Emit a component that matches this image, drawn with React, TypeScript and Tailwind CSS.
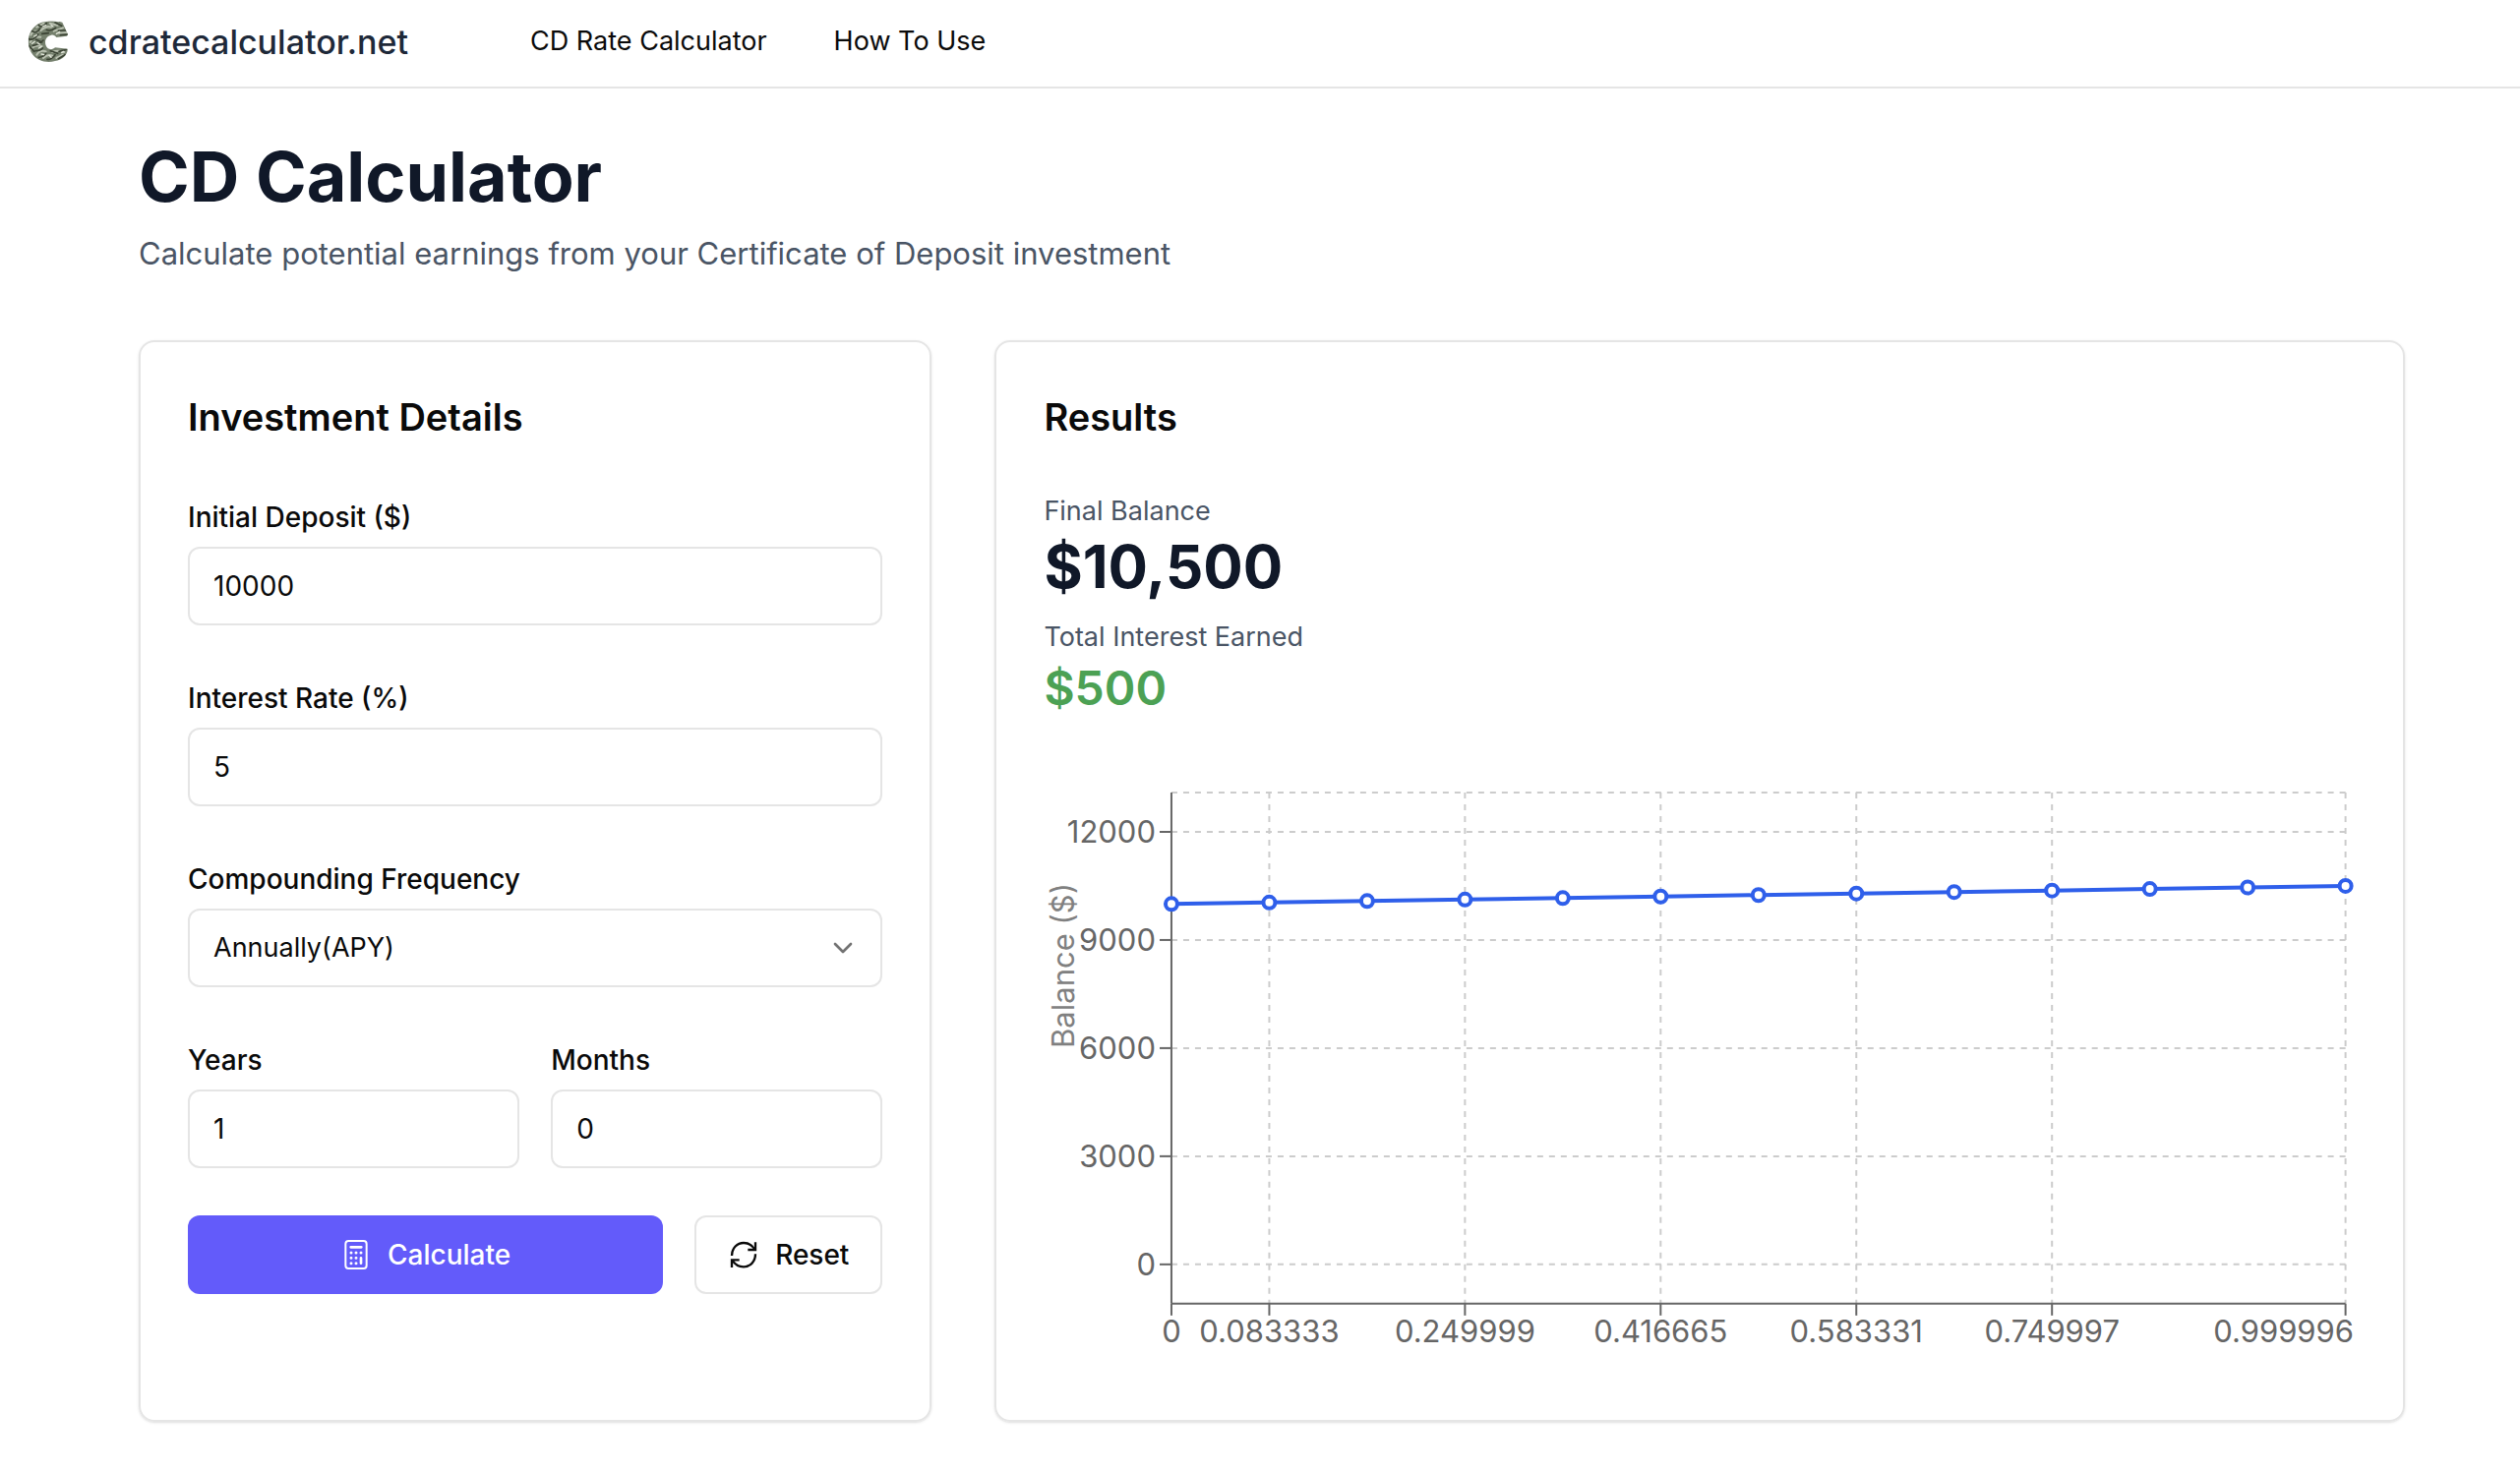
import { useState } from 'react';
import type { InputHTMLAttributes } from 'react';
import { ChevronDown } from 'lucide-react';

const frequencies = ['Annually(APY)', 'Semi-annually', 'Quarterly', 'Monthly', 'Daily'];

const navLinks = [
  { label: 'CD Rate Calculator', href: '#calculator' },
  { label: 'How To Use', href: '#how-to-use' },
];

const chartPoints = [
  10000, 10040.74, 10081.65, 10122.72, 10163.96, 10205.37, 10246.95, 10288.7, 10330.62, 10372.7, 10414.97,
  10457.4, 10500,
];

const yTicks = [0, 3000, 6000, 9000, 12000];

const xTicks = [
  { index: 0, label: '0' },
  { index: 1, label: '0.083333' },
  { index: 3, label: '0.249999' },
  { index: 5, label: '0.416665' },
  { index: 7, label: '0.583331' },
  { index: 9, label: '0.749997' },
  { index: 12, label: '0.999996', labelX: 1261 },
];

// Plot area inside the chart's viewBox
const plot = { left: 130, right: 1324, top: 26, bottom: 546, zero: 506, perUnit: 110 / 3000 };

const xAt = (index: number) => plot.left + ((plot.right - plot.left) * index) / (chartPoints.length - 1);
const yAt = (value: number) => plot.zero - value * plot.perUnit;

// C made of crumpled bank notes
function Logo() {
  return (
    <svg viewBox="0 0 126 126" className="size-[42px]" aria-hidden="true">
      <clipPath id="logo-c">
        <path d="M62 2 C78 0 92 5 98 3 L106 5 C112 18 118 30 123 42 L120 47 L88 51 C84 45 78 42 72 44 C56 48 51 62 56 76 C61 90 76 90 84 82 L122 86 C124 100 108 120 84 123 C60 130 28 124 12 98 C-4 72 0 38 22 18 C34 6 48 3 62 2Z" />
      </clipPath>
      <g clipPath="url(#logo-c)" fill="none" strokeLinecap="round">
        <rect width="126" height="126" fill="#75806d" />
        <path
          d="M28 20 L50 8 M40 30 Q56 14 72 20 M68 8 L92 14 M80 32 L108 22 M96 38 L118 36 M10 44 Q18 26 32 34 M8 66 Q20 46 40 50 M10 88 Q22 72 44 78 M28 104 Q38 88 56 94 M48 114 Q62 100 78 108 M76 96 Q92 88 112 96 M88 114 L108 104"
          stroke="#b9c0b0"
          strokeWidth="6"
        />
        <path
          d="M34 14 Q44 24 58 8 M58 28 Q70 34 86 22 M84 6 L104 16 M94 30 L116 30 M100 44 L124 42 M14 32 Q30 40 38 24 M4 56 Q18 62 32 42 M16 76 Q34 74 48 60 M6 78 L20 94 M24 92 Q40 92 46 84 M34 112 Q50 110 56 100 M60 118 Q72 120 84 104 M70 92 L92 100 M96 94 L118 88 M94 116 L114 104 M26 58 L44 66 M44 40 L64 38"
          stroke="#3b4334"
          strokeWidth="5"
        />
        <path
          d="M46 18 L56 14 M72 14 L78 18 M20 48 L28 44 M14 70 L22 64 M34 84 L42 80 M66 106 L72 112 M104 98 L110 94 M88 40 L98 34 M42 102 L50 104 M30 68 L38 72"
          stroke="#e2e6da"
          strokeWidth="4"
        />
      </g>
    </svg>
  );
}

function CalculatorIcon() {
  return (
    <svg viewBox="0 0 96 96" className="size-8" fill="none" stroke="currentColor" strokeWidth="6" aria-hidden="true">
      <rect x="16" y="6" width="64" height="84" rx="9" />
      <path d="M32 25h32M63 58v16" strokeWidth="8" strokeLinecap="round" />
      <path d="M33 42h0M48 42h0M63 42h0M33 58h0M48 58h0M33 74h0M48 74h0" strokeWidth="9" strokeLinecap="round" />
    </svg>
  );
}

function ResetIcon() {
  return (
    <svg viewBox="-9 -9 96 96" className="size-8" fill="none" stroke="currentColor" strokeWidth="7" aria-hidden="true">
      <path d="M3 42 C3 18 20 3 39 3 C54 3 66 11 74 24" />
      <path d="M75 1V24H52" />
      <path d="M75 37 C75 61 58 76 39 76 C24 76 12 68 4 55" />
      <path d="M3 78V55H26" />
    </svg>
  );
}

interface FieldProps extends InputHTMLAttributes<HTMLInputElement> {
  id: string;
  label: string;
}

function Field({ id, label, ...props }: FieldProps) {
  return (
    <div className="flex min-w-0 flex-1 flex-col gap-4">
      <label htmlFor={id} className="text-[28px] leading-7 font-medium">
        {label}
      </label>
      <input
        id={id}
        type="text"
        inputMode="decimal"
        className="h-20 w-full rounded-xl border-2 border-neutral-200 px-6 text-[28px] outline-none focus:border-indigo-400"
        {...props}
      />
    </div>
  );
}

function BalanceChart() {
  const line = chartPoints.map((value, index) => `${xAt(index)},${yAt(value)}`).join(' ');

  return (
    <svg viewBox="0 0 1334 616" className="block w-full" role="img" aria-label="Balance over time">
      {/* Grid */}
      <g stroke="#ccc" strokeWidth="2" strokeDasharray="6 6">
        <line x1={plot.left} x2={plot.right} y1={plot.top} y2={plot.top} />
        {yTicks.map((tick) => (
          <line key={tick} x1={plot.left} x2={plot.right} y1={yAt(tick)} y2={yAt(tick)} />
        ))}
        {xTicks.slice(1).map((tick) => (
          <line key={tick.index} x1={xAt(tick.index)} x2={xAt(tick.index)} y1={plot.top} y2={plot.bottom} />
        ))}
      </g>

      {/* Axes */}
      <g stroke="#666" strokeWidth="2">
        <line x1={plot.left} x2={plot.left} y1={plot.top} y2={plot.bottom} />
        <line x1={plot.left} x2={plot.right} y1={plot.bottom} y2={plot.bottom} />
        {yTicks.map((tick) => (
          <line key={tick} x1={plot.left - 12} x2={plot.left} y1={yAt(tick)} y2={yAt(tick)} />
        ))}
        {xTicks.map((tick) => (
          <line key={tick.index} x1={xAt(tick.index)} x2={xAt(tick.index)} y1={plot.bottom} y2={plot.bottom + 12} />
        ))}
      </g>
      <g fill="#666" fontSize="31">
        {yTicks.map((tick) => (
          <text key={tick} x={plot.left - 16} y={yAt(tick) + 11} textAnchor="end">
            {tick}
          </text>
        ))}
        {xTicks.map((tick) => (
          <text key={tick.index} x={tick.labelX ?? xAt(tick.index)} y={plot.bottom + 39} textAnchor="middle">
            {tick.label}
          </text>
        ))}
      </g>
      <text transform="translate(31 286) rotate(-90)" fill="#808080" fontSize="31">
        Balance ($)
      </text>

      {/* Balance line */}
      <polyline points={line} fill="none" stroke="#2f5fea" strokeWidth="4" />
      {chartPoints.map((value, index) => (
        <circle key={index} cx={xAt(index)} cy={yAt(value)} r="6" fill="#fff" stroke="#2f5fea" strokeWidth="4" />
      ))}
    </svg>
  );
}

export default function App() {
  const [deposit, setDeposit] = useState('10000');
  const [rate, setRate] = useState('5');
  const [frequency, setFrequency] = useState(frequencies[0]);
  const [years, setYears] = useState('1');
  const [months, setMonths] = useState('0');

  const handleReset = () => {
    setDeposit('10000');
    setRate('5');
    setFrequency(frequencies[0]);
    setYears('1');
    setMonths('0');
  };

  return (
    <div className="min-h-screen bg-white font-['Inter',sans-serif] text-neutral-950">
      {/* Header */}
      <header className="flex h-[90px] items-center border-b-2 border-neutral-200 px-7 pb-1">
        <a href="#" className="flex items-center gap-5 text-[34px] font-medium text-gray-800">
          <Logo />
          cdratecalculator.net
        </a>
        <nav className="ml-31 flex gap-17 text-[27px]">
          {navLinks.map((link) => (
            <a key={link.label} href={link.href}>
              {link.label}
            </a>
          ))}
        </nav>
      </header>

      <main className="pt-12 pr-[117px] pl-[141px]">
        <h1 className="text-[70px] leading-[84px] font-bold text-gray-900">CD Calculator</h1>
        <p className="mt-3 text-[31px] leading-12 text-gray-600">
          Calculate potential earnings from your Certificate of Deposit investment
        </p>

        <div className="mt-16 grid grid-cols-[36fr_64fr] gap-16">
          {/* Investment details */}
          <section className="rounded-2xl border-2 border-neutral-200 p-12 shadow-sm">
            <h2 className="text-[38px] leading-14 font-semibold">Investment Details</h2>
            <form className="mt-15 flex flex-col gap-15" onSubmit={(e) => e.preventDefault()}>
              <Field id="deposit" label="Initial Deposit ($)" value={deposit} onChange={(e) => setDeposit(e.target.value)} />
              <Field id="rate" label="Interest Rate (%)" value={rate} onChange={(e) => setRate(e.target.value)} />
              <div className="flex flex-col gap-4">
                <label htmlFor="frequency" className="text-[28px] leading-7 font-medium">
                  Compounding Frequency
                </label>
                <div className="relative">
                  <select
                    id="frequency"
                    value={frequency}
                    onChange={(e) => setFrequency(e.target.value)}
                    className="h-20 w-full appearance-none rounded-xl border-2 border-neutral-200 bg-white px-6 text-[27px] outline-none"
                  >
                    {frequencies.map((item) => (
                      <option key={item}>{item}</option>
                    ))}
                  </select>
                  <ChevronDown className="pointer-events-none absolute top-6 right-6 size-8 text-neutral-500" />
                </div>
              </div>
              <div className="flex gap-8">
                <Field id="years" label="Years" value={years} onChange={(e) => setYears(e.target.value)} />
                <Field id="months" label="Months" value={months} onChange={(e) => setMonths(e.target.value)} />
              </div>
              <div className="-mt-3 flex gap-8 text-[28px] font-medium">
                <button type="submit" className="flex h-20 flex-1 items-center justify-center gap-4 rounded-xl bg-[#635bfa] text-white">
                  <CalculatorIcon />
                  Calculate
                </button>
                <button
                  type="button"
                  onClick={handleReset}
                  className="flex h-20 items-center justify-center gap-4 rounded-xl border-2 border-neutral-200 px-8"
                >
                  <ResetIcon />
                  Reset
                </button>
              </div>
            </form>
          </section>

          {/* Results */}
          <section className="rounded-2xl border-2 border-neutral-200 p-12 shadow-sm">
            <h2 className="text-[38px] leading-14 font-semibold">Results</h2>
            <dl className="mt-12">
              <dt className="text-[27px] leading-10 text-gray-600">Final Balance</dt>
              <dd className="text-6xl leading-18 font-bold text-gray-900">$10,500</dd>
              <dt className="mt-4 text-[27px] leading-10 text-gray-600">Total Interest Earned</dt>
              <dd className="text-5xl leading-16 font-semibold text-[#4ca154]">$500</dd>
            </dl>
            <div className="mt-12">
              <BalanceChart />
            </div>
          </section>
        </div>
      </main>
    </div>
  );
}
